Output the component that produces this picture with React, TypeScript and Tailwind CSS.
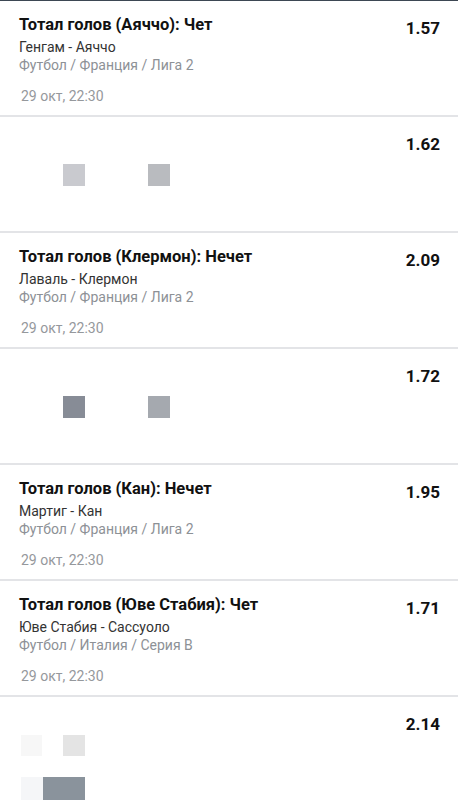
type Bet = {
  title?: string;
  match?: string;
  league?: string;
  date?: string;
  odds: string;
  censor?: { x: number; y: number; w: number; h: number; color: string }[];
};

const bets: Bet[] = [
  {
    title: "Тотал голов (Аяччо): Чет",
    match: "Генгам - Аяччо",
    league: "Футбол / Франция / Лига 2",
    date: "29 окт, 22:30",
    odds: "1.57",
  },
  {
    odds: "1.62",
    censor: [
      { x: 63, y: 47, w: 22, h: 22, color: "#c9cacf" },
      { x: 148, y: 47, w: 22, h: 22, color: "#b9bbbf" },
    ],
  },
  {
    title: "Тотал голов (Клермон): Нечет",
    match: "Лаваль - Клермон",
    league: "Футбол / Франция / Лига 2",
    date: "29 окт, 22:30",
    odds: "2.09",
  },
  {
    odds: "1.72",
    censor: [
      { x: 63, y: 47, w: 22, h: 22, color: "#878c96" },
      { x: 148, y: 47, w: 22, h: 22, color: "#a5a9af" },
    ],
  },
  {
    title: "Тотал голов (Кан): Нечет",
    match: "Мартиг - Кан",
    league: "Футбол / Франция / Лига 2",
    date: "29 окт, 22:30",
    odds: "1.95",
  },
  {
    title: "Тотал голов (Юве Стабия): Чет",
    match: "Юве Стабия - Сассуоло",
    league: "Футбол / Италия / Серия B",
    date: "29 окт, 22:30",
    odds: "1.71",
  },
  {
    odds: "2.14",
    censor: [
      { x: 21, y: 38, w: 21, h: 21, color: "#f7f7f7" },
      { x: 63, y: 38, w: 22, h: 21, color: "#e4e4e4" },
      { x: 21, y: 80, w: 22, h: 24, color: "#f5f6f8" },
      { x: 43, y: 80, w: 42, h: 24, color: "#8a939c" },
    ],
  },
];

function BetRow({ bet }: { bet: Bet }) {
  return (
    <div className="relative h-[116px] shrink-0 border-b-2 border-[#e3e4e7] bg-white">
      {/* Selection details */}
      {bet.title && (
        <div className="pl-[19px] pt-[14px]">
          <div className="h-[20px] text-[16.5px] leading-[20px] font-bold text-[#111]">
            {bet.title}
          </div>
          <div className="mt-[3px] h-[18px] text-[14px] leading-[18px] text-[#333]">
            {bet.match}
          </div>
          <div className="h-[18px] text-[14px] leading-[18px] text-[#8d9196]">
            {bet.league}
          </div>
          <div className="mt-[13px] pl-[2px] h-[18px] text-[14px] leading-[18px] text-[#95989c]">
            {bet.date}
          </div>
        </div>
      )}

      {/* Odds */}
      <div className="absolute right-[18px] top-[16px] text-[17px] leading-[22px] font-bold text-[#111]">
        {bet.odds}
      </div>

      {/* Hidden (pixelated) content */}
      {bet.censor?.map((c, i) => (
        <div
          key={i}
          className="absolute"
          style={{ left: c.x, top: c.y, width: c.w, height: c.h, background: c.color }}
        />
      ))}
    </div>
  );
}

export default function App() {
  return (
    <div
      className="h-[800px] w-full overflow-hidden bg-white"
      style={{ fontFamily: "Roboto, 'Noto Sans', sans-serif" }}
    >
      <div className="h-px bg-[#3d4753]" />
      {bets.map((b, i) => (
        <BetRow key={i} bet={b} />
      ))}
    </div>
  );
}
